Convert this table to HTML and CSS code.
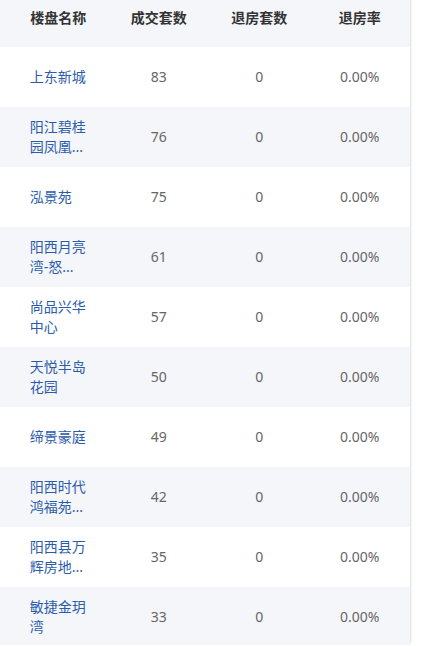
FILE: index.html
```html
<!DOCTYPE html>
<html>
<head>
    <meta charset="utf-8" />
    <title>楼盘成交</title>
    <link rel="stylesheet" href="styles.css">
</head>
<body>
    <div class="card">
        <div class="row head">
            <div class="cell">楼盘名称</div>
            <div class="cell">成交套数</div>
            <div class="cell">退房套数</div>
            <div class="cell">退房率</div>
        </div>
        <div id="rows"></div>
    </div>

    <script>
    const data = [
      ["上东新城", 83], ["阳江碧桂园凤凰...", 76], ["泓景苑", 75],
      ["阳西月亮湾-怒...", 61], ["尚品兴华中心", 57], ["天悦半岛花园", 50],
      ["缔景豪庭", 49], ["阳西时代鸿福苑...", 42], ["阳西县万辉房地...", 35],
      ["敏捷金玥湾", 33]
    ];

    const box = document.getElementById("rows");
    data.forEach((d, i) => {
      const row = document.createElement("div");
      row.className = "row" + (i % 2 ? " alt" : "");
      row.innerHTML = `
        <div class="cell"><a class="name">${d[0]}</a></div>
        <div class="cell num">${d[1]}</div>
        <div class="cell num">0</div>
        <div class="cell num">0.00%</div>
      `;
      box.appendChild(row);
    });
    </script>
</body>
</html>
```

FILE: styles.css
```css
body {
    margin: 0;
    font-family: "Noto Sans", "Noto Sans CJK SC", sans-serif;
    font-size: 14px;
    background: #fff;
}

.card {
    width: 410px;
    height: 645px;
    overflow: hidden;
    border-right: 1px solid #e3e5ea;
    border-bottom-right-radius: 4px;
    box-shadow: 1px 0 2px rgba(0, 0, 0, 0.04);
}

.row {
    display: grid;
    grid-template-columns: repeat(4, 1fr);
    padding-left: 8px;
    height: 60px;
    align-items: center;
}

.row.head {
    height: 47px;
    align-items: start;
    padding-top: 8px;
    box-sizing: border-box;
    background-color: #f5f6fa;
    font-weight: bold;
    color: #333;
}

.row.alt {
    background-color: #f5f6fa;
}

.cell {
    text-align: center;
    line-height: 20px;
}

.name {
    display: block;
    width: 57px;
    margin: 0 auto;
    text-align: left;
    color: #2b5cab;
    cursor: pointer;
}

.num {
    color: #666;
}
```
